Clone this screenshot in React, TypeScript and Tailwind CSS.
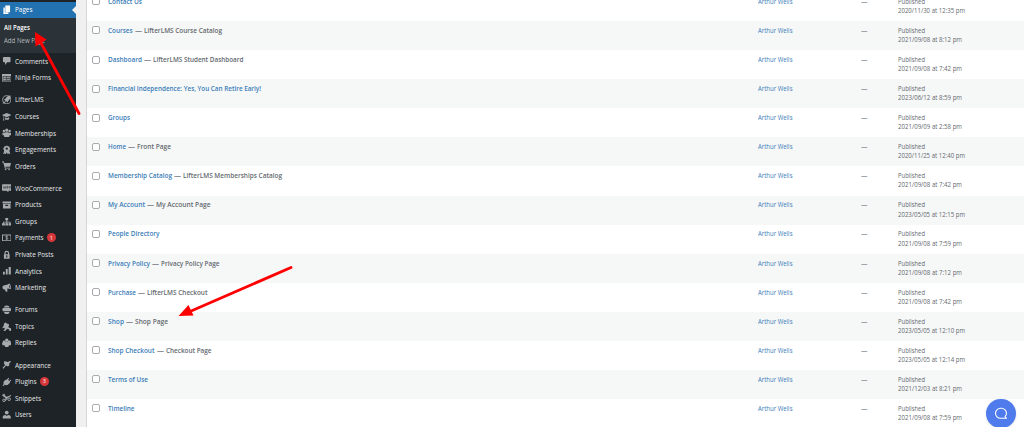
import type { ReactNode } from "react";

interface MenuItem {
	label: string;
	icon: ReactNode;
	width: number;
	badge?: string;
}

interface PageRow {
	title: string;
	titleWidth: number;
	state?: string;
	stateWidth?: number;
	date: string;
	dateWidth: number;
}

const icons = {
	pages: <path d="M7 1h10v14H7V1zM3 5h3v11h7.500v3H3z" />,
	comments: (
		<path d="M4 2h12a2 2 0 0 1 2 2v7a2 2 0 0 1-2 2h-5l-4.500 6V13H4a2 2 0 0 1-2-2V4a2 2 0 0 1 2-2z" />
	),
	forms: (
		<>
			<path fillRule="evenodd" d="M0 2h20v16H0V2zm1.500 4.500v10h17v-10h-17z" />
			<path d="M2 7h16v9H2z" opacity="0.35" />
			<path d="M3 8h5v3H3zM10 8h7v2h-7zM3 12.500h5V15H3zM10 12.500h7V14h-7z" />
		</>
	),
	lifter: (
		<>
			<circle cx="10" cy="10" r="8.500" fill="none" stroke="currentColor" strokeWidth="1.800" />
			<path d="M18 1c-5 0-9 3-10.500 6.500L4 10l3 1-1 4 4-2 1 3.500 2-4C16.500 10 18 6 18 1zM1 19l3-6 3 3z" />
		</>
	),
	courses: (
		<path d="M10 2L0 6.500l3 1.400V14l-1 4h3l-1-4V8.500l6 2.700 10-4.700L10 2zM6 11v4c1.500 2 6.500 2 9 0v-4l-5 2-4-2z" />
	),
	memberships: (
		<>
			<circle cx="10" cy="4.500" r="3.200" />
			<circle cx="4" cy="6.500" r="2.600" />
			<circle cx="16" cy="6.500" r="2.600" />
			<path d="M1 10h5l1-1h6l1 1h5v5h-3l-1 4H5l-1-4H1z" />
		</>
	),
	engagements: (
		<path
			fillRule="evenodd"
			d="M10 1l2.500 1.500 3 .5.500 3 1.500 2-1.500 2.500-.5 2 2 6.500-4-1-1.500 1.500L10 15l-2 4.500L6.500 18l-4 1 2-6.500-.5-2L2.500 8 4 6l.5-3 3-.5L10 1zm0 4a2.500 2.500 0 1 0 0 5 2.500 2.500 0 0 0 0-5z"
		/>
	),
	orders: (
		<>
			<path d="M0 1h4l1 3h14l-2 8H7l.5 2H17v2H6L2.800 3H0z" />
			<circle cx="7.500" cy="18" r="1.700" />
			<circle cx="15" cy="18" r="1.700" />
		</>
	),
	woo: (
		<>
			<path d="M2 2.500h16a2 2 0 0 1 2 2v10a2 2 0 0 1-2 2h-5l1 3-5-3H2a2 2 0 0 1-2-2v-10a2 2 0 0 1 2-2z" />
			<path
				d="M2.500 6.500l1.500 5 2-4 1.500 4 1-5M10.500 7h2v4h-2zM15.500 7h2v4h-2z"
				fill="none"
				stroke="#1d2327"
				strokeWidth="1"
			/>
		</>
	),
	products: <path fillRule="evenodd" d="M1 3h18v4H1V3zm1 5h16v10H2V8zm5 2v2.500h6V10H7z" />,
	groups: (
		<path d="M7 2h6v5h-2v3h7v3h2v5h-6v-5h2v-1.500h-5V13h2v5H7v-5h2v-1.500H4V13h2v5H0v-5h2v-3h7V7H7z" />
	),
	payments: (
		<>
			<path fillRule="evenodd" d="M0 3h20v14H0V3zm2 2v10h16V5H2z" />
			<path
				d="M12.500 7.500c-1-1-5-1-5 .8s5 1.500 5 3.400-4 2-5 .8M10 5.500v9"
				fill="none"
				stroke="currentColor"
				strokeWidth="1.600"
			/>
		</>
	),
	lock: (
		<path
			fillRule="evenodd"
			d="M4 9h1V6.500a5 5 0 0 1 10 0V9h1v9.500H4V9zm3.500 0h5V6.500a2.500 2.500 0 0 0-5 0V9zm2.500 2a1.500 1.500 0 0 0-1 2.700V16h2v-2.300a1.500 1.500 0 0 0-1-2.700z"
		/>
	),
	analytics: <path d="M14 2h4.500v16H14zM8 6.500h4V18H8zM2 12h4v6H2z" />,
	marketing: (
		<path
			fillRule="evenodd"
			d="M15 1c3 1 5 9 3 12-3-1-5-1.500-7-1l.5 5.500-3 1.500-2.500-5.500C3 14.500 1 12 1 9s2-4.500 4.500-4.500C9 4.500 12 3.500 15 1zm.5 3c-1 2 0 6 1.500 7 .7-2-.2-5.800-1.500-7z"
		/>
	),
	forums: (
		<path d="M10 1c3.500 0 5.500 2 6 4H4c.5-2 2.500-4 6-4zM2 6.500h16l1.500 3.500-1.500 3H2L.5 10 2 6.500zM4 14.500h12c-1 3-3 4.500-6 4.500s-5-1.500-6-4.500z" />
	),
	topics: (
		<path d="M7 1l3 2 4 1 1 4-2 2 2 2 4 1v6h-3l-1-3-4-2-2 3-3 2H3l3-5-1-2-5 1 3-4 1-4 1-3z" />
	),
	replies: (
		<>
			<circle cx="10" cy="4.500" r="3.500" />
			<circle cx="4.500" cy="8" r="3" />
			<circle cx="15.500" cy="8" r="3" />
			<path d="M0 10l7-2h6l7 2-1 5h-4l-2 4H7l-2-4H1z" />
		</>
	),
	appearance: (
		<path d="M5 2l7 2 5-2 2 1-4 5 .5 3-3 2.500-4-2L3 18.500 1 17l5.500-6.500L4 8z" />
	),
	plugins: (
		<path d="M13.500 1.500l1.500 1-2 4 2.500 1.700 3-3.200 1 1.500-3 4 .5 1-4.500 5-4 1-3-1-3 3-1.500-1.500 2.500-3-.5-4 2-3 4-3 1 .7z" />
	),
	snippets: (
		<>
			<path d="M1 3l9 5 9-4v2.500L12 10l-3 2-8-6.500z" />
			<path d="M5 18l3.500-9L12 10l-3.500 6z" />
			<g fill="none" stroke="currentColor" strokeWidth="2">
				<circle cx="4" cy="15.500" r="2.600" />
				<circle cx="15" cy="13" r="2.800" />
				<circle cx="4" cy="4.500" r="2" />
			</g>
		</>
	),
	users: (
		<>
			<circle cx="10" cy="5.500" r="4" />
			<path d="M1.500 18v-3c0-3 2.500-4.500 5.500-4.500l3 2 3-2c3 0 5.500 1.500 5.500 4.500v3z" />
		</>
	),
};

const menuGroups: MenuItem[][] = [
	[
		{ label: "Comments", icon: icons.comments, width: 33 },
		{ label: "Ninja Forms", icon: icons.forms, width: 36 },
	],
	[
		{ label: "LifterLMS", icon: icons.lifter, width: 28.5 },
		{ label: "Courses", icon: icons.courses, width: 24 },
		{ label: "Memberships", icon: icons.memberships, width: 41 },
		{ label: "Engagements", icon: icons.engagements, width: 41 },
		{ label: "Orders", icon: icons.orders, width: 20.5 },
	],
	[
		{ label: "WooCommerce", icon: icons.woo, width: 47 },
		{ label: "Products", icon: icons.products, width: 26.5 },
		{ label: "Groups", icon: icons.groups, width: 22 },
		{ label: "Payments", icon: icons.payments, width: 28.5, badge: "1" },
		{ label: "Private Posts", icon: icons.lock, width: 38.5 },
		{ label: "Analytics", icon: icons.analytics, width: 27 },
		{ label: "Marketing", icon: icons.marketing, width: 31 },
	],
	[
		{ label: "Forums", icon: icons.forums, width: 22.5 },
		{ label: "Topics", icon: icons.topics, width: 19 },
		{ label: "Replies", icon: icons.replies, width: 21.5 },
	],
	[
		{ label: "Appearance", icon: icons.appearance, width: 36 },
		{ label: "Plugins", icon: icons.plugins, width: 21.5, badge: "3" },
		{ label: "Snippets", icon: icons.snippets, width: 26 },
		{ label: "Users", icon: icons.users, width: 16.5 },
	],
];

const rows: PageRow[] = [
	{ title: "Contact Us", titleWidth: 34, date: "2020/11/30 at 12:35 pm", dateWidth: 67 },
	{ title: "Courses", titleWidth: 24.5, state: "LifterLMS Course Catalog", stateWidth: 78, date: "2021/09/08 at 8:12 pm", dateWidth: 64 },
	{ title: "Dashboard", titleWidth: 34, state: "LifterLMS Student Dashboard", stateWidth: 90.5, date: "2021/09/08 at 7:42 pm", dateWidth: 64 },
	{ title: "Financial Independence: Yes, You Can Retire Early!", titleWidth: 153, date: "2023/06/12 at 8:59 pm", dateWidth: 64 },
	{ title: "Groups", titleWidth: 22, date: "2021/09/09 at 2:58 pm", dateWidth: 64 },
	{ title: "Home", titleWidth: 18, state: "Front Page", stateWidth: 34, date: "2020/11/25 at 12:40 pm", dateWidth: 67 },
	{ title: "Membership Catalog", titleWidth: 64, state: "LifterLMS Memberships Catalog", stateWidth: 99, date: "2021/09/08 at 7:42 pm", dateWidth: 64 },
	{ title: "My Account", titleWidth: 37, state: "My Account Page", stateWidth: 54.5, date: "2023/05/05 at 12:15 pm", dateWidth: 67 },
	{ title: "People Directory", titleWidth: 51.5, date: "2021/09/08 at 7:59 pm", dateWidth: 64 },
	{ title: "Privacy Policy", titleWidth: 42, state: "Privacy Policy Page", stateWidth: 58.5, date: "2021/09/08 at 7:12 pm", dateWidth: 64 },
	{ title: "Purchase", titleWidth: 28, state: "LifterLMS Checkout", stateWidth: 60.5, date: "2021/09/08 at 7:42 pm", dateWidth: 64 },
	{ title: "Shop", titleWidth: 16, state: "Shop Page", stateWidth: 33, date: "2023/05/05 at 12:10 pm", dateWidth: 67 },
	{ title: "Shop Checkout", titleWidth: 46.5, state: "Checkout Page", stateWidth: 45.5, date: "2023/05/05 at 12:14 pm", dateWidth: 67 },
	{ title: "Terms of Use", titleWidth: 40, date: "2021/12/03 at 8:21 pm", dateWidth: 64 },
	{ title: "Timeline", titleWidth: 26.5, date: "2021/09/08 at 7:59 pm", dateWidth: 64 },
];

// Scales a label horizontally to its column width once it has been laid out.
function FitText({ width, children }: { width: number; children: string }) {
	const fit = (el: HTMLSpanElement | null) => {
		if (!el) return;
		const apply = () => {
			el.style.transform = "none";
			el.style.transform = `scaleX(${width / el.getBoundingClientRect().width})`;
		};
		apply();
		document.fonts.ready.then(apply);
	};

	return (
		<span className="inline-block shrink-0" style={{ width }}>
			<span ref={fit} className="inline-block origin-left whitespace-nowrap">
				{children}
			</span>
		</span>
	);
}

function Icon({ children }: { children: ReactNode }) {
	return (
		<svg viewBox="0 0 20 20" className="size-[9.5px] shrink-0" fill="currentColor">
			{children}
		</svg>
	);
}

function Sidebar() {
	return (
		<nav className="flex w-[75.500px] shrink-0 flex-col bg-[#1d2327] text-[7.200px] text-[#e6e7e8]">
			<div className="h-[1.500px] shrink-0" />
			<div className="flex h-[16.500px] shrink-0 items-center gap-[4px] bg-[#2271b1] pl-[1.500px] text-white">
				<Icon>{icons.pages}</Icon>
				<FitText width={17.5}>Pages</FitText>
				<span className="ml-auto border-y-[4px] border-r-[4px] border-y-transparent border-r-[#f0f0f1]" />
			</div>
			<div className="flex h-[34.800px] shrink-0 flex-col bg-[#2c3338] pt-[3.200px] pl-[3.500px] text-[6.800px]">
				<div className="flex h-[13.500px] items-center font-semibold text-white">
					<FitText width={26}>All Pages</FitText>
				</div>
				<div className="flex h-[13.500px] items-center text-[#b4b9be]">
					<FitText width={41}>Add New Page</FitText>
				</div>
			</div>
			<div className="flex flex-col gap-[5.500px]">
				{menuGroups.map((group) => (
					<ul key={group[0].label}>
						{group.map((item) => (
							<li key={item.label} className="flex h-[16.580px] items-center gap-[4px] pl-[1.500px]">
								<span className="flex text-[#a7aaad]">
									<Icon>{item.icon}</Icon>
								</span>
								<FitText width={item.width}>{item.label}</FitText>
								{item.badge && (
									<span className="-ml-[0.500px] flex size-[8.800px] items-center justify-center rounded-full bg-[#d63638] text-[5.500px] text-white">
										{item.badge}
									</span>
								)}
							</li>
						))}
					</ul>
				))}
			</div>
		</nav>
	);
}

function PagesTable() {
	return (
		<section className="-mt-[8px] min-w-0 flex-1 border-l border-[#d5d6d9] bg-white">
			{rows.map((row, index) => (
				<article
					key={row.title}
					className={`flex h-[29.080px] items-start pt-[4.800px] text-[6.600px] leading-[9.200px] text-[#646a70] ${
						index % 2 ? "bg-[#f6f7f7]" : "bg-white"
					}`}
				>
					<span className="mt-[0.600px] ml-[5px] size-[8px] shrink-0 rounded-[2px] border border-[#a9abaf] bg-white" />
					<h3 className="ml-[8px] flex w-[649.500px] shrink-0 items-center text-[7.100px] font-semibold">
						<span className="text-[#3a7db8]">
							<FitText width={row.titleWidth}>{row.title}</FitText>
						</span>
						{row.state && (
							<>
								<span className="mx-[2px] flex">
									<FitText width={7}>—</FitText>
								</span>
								<FitText width={row.stateWidth ?? 0}>{row.state}</FitText>
							</>
						)}
					</h3>
					<span className="w-[103.500px] shrink-0 text-[#3a7db8]">
						<FitText width={34.5}>Arthur Wells</FitText>
					</span>
					<span className="w-[37px] shrink-0">
						<FitText width={6.5}>—</FitText>
					</span>
					<div className="flex flex-col">
						<FitText width={27}>Published</FitText>
						<FitText width={row.dateWidth}>{row.date}</FitText>
					</div>
				</article>
			))}
		</section>
	);
}

export default function App() {
	return (
		<div className="relative flex h-[427px] w-[1024px] overflow-hidden bg-[#f0f0f1] font-['Open_Sans','Noto_Sans',sans-serif]">
			<Sidebar />
			<main className="flex min-w-0 flex-1 pl-[10.500px]">
				<PagesTable />
			</main>

			<svg
				viewBox="0 0 1024 427"
				className="pointer-events-none absolute inset-0 h-full w-full"
				fill="red"
				stroke="red"
			>
				<path d="M41 43L79 113.500M291 267.500L190 311.500" strokeWidth="2.800" strokeLinecap="round" />
				<path d="M35 32L46.500 39.500L35.500 46.500zM178.500 316L188.500 305L193.500 315.500z" stroke="none" />
			</svg>

			<button
				type="button"
				aria-label="Open chat"
				className="absolute top-[398.5px] left-[986px] flex size-[29.500px] items-center justify-center rounded-full bg-[#4f7bed] text-white shadow-sm"
			>
				<svg viewBox="0 0 14 14" className="size-[14px]" fill="none" stroke="currentColor" strokeWidth="1.100">
					<path
						d="M12.500 12.300H6.500a5 5 0 0 1 0-10h1a5 5 0 0 1 5 5c0 1.500-.6 2.500-1.500 3.300z"
						strokeLinejoin="round"
					/>
				</svg>
			</button>
		</div>
	);
}
